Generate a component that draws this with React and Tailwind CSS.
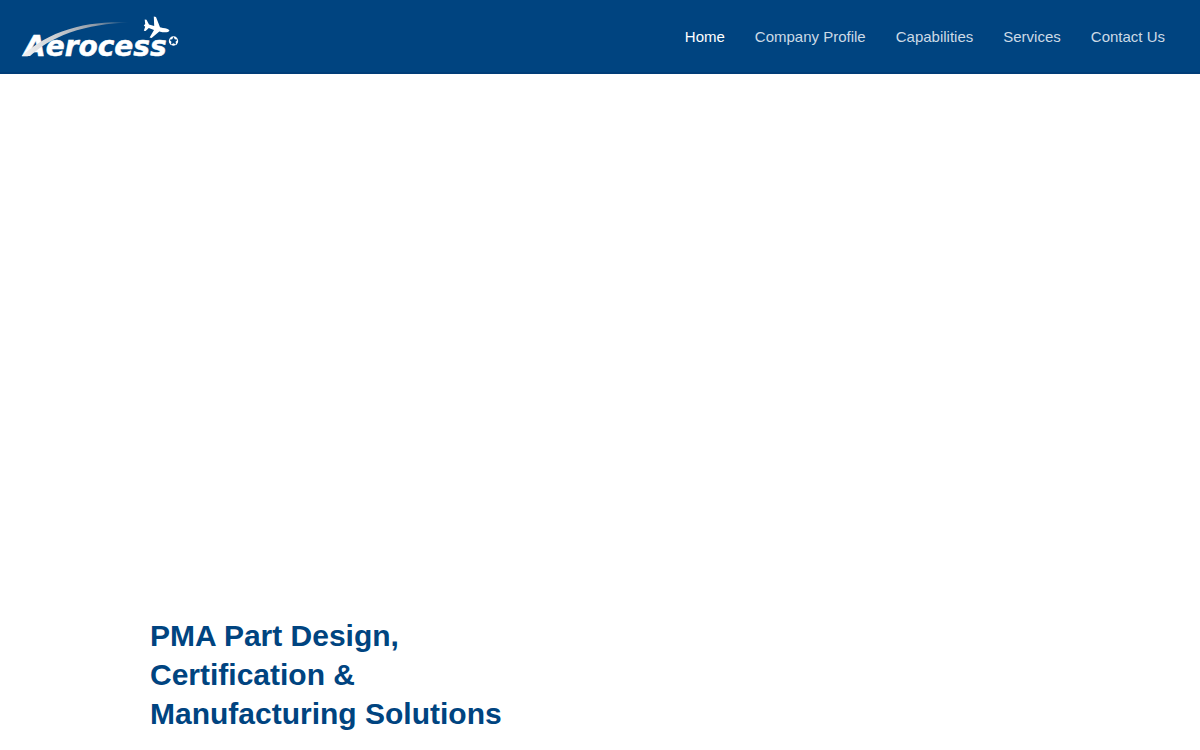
import React from 'react';

const links = ['Home', 'Company Profile', 'Capabilities', 'Services', 'Contact Us'];

function Logo() {
  return (
    <svg viewBox="0 -4 160 54" className="h-[54px] w-40" role="img" aria-label="Aerocess">
      <defs>
        <linearGradient id="swoosh" gradientUnits="userSpaceOnUse" x1="2" y1="40" x2="110" y2="8">
          <stop offset="0" stopColor="#f2f2f2" />
          <stop offset="0.35" stopColor="#c9ccd0" />
          <stop offset="0.7" stopColor="#8e99a6" />
          <stop offset="1" stopColor="#004480" />
        </linearGradient>
      </defs>
      <text
        x="4"
        y="42"
        fontSize="28"
        fontWeight="700"
        fontStyle="italic"
        fill="#ffffff"
        stroke="#ffffff"
        strokeWidth="0.5"
        className="font-['DejaVu_Sans',sans-serif]"
      >
        Aerocess
      </text>
      {/* Swoosh */}
      <path
        d="M2 42 C10 34 24 24 42 17.500 C64 9.500 86 7.500 110 8.500 C88 9 68 12.500 50 18.500 C32 25 20 33 10 42 Z"
        fill="url(#swoosh)"
      />
      {/* Plane */}
      <path
        d="M149.500 16.500 C148.500 15 146 14.200 143 14 L140 13.300 L136 3 L133.800 2.600 L134.200 12 L129 10.500 L126.500 5.800 L124.700 5.400 L125.200 10 L123.800 11.400 L125.200 12.800 L123.800 16.700 L125.600 17.100 L128.800 14 L134 16 L129.600 23.400 L131.600 24 L139.300 17.600 L142.500 18.200 C146 18.700 149 18.100 149.500 16.500 Z"
        fill="#ffffff"
      />
      {/* Star badge */}
      <circle cx="153.500" cy="27" r="4.700" fill="#ffffff" />
      <path
        d="M153.500 22.800 L154.800 25.300 L157.500 25.700 L155.600 27.700 L156 30.500 L153.500 29.200 L151 30.500 L151.400 27.700 L149.500 25.700 L152.200 25.300 Z"
        fill="#004480"
      />
    </svg>
  );
}

function App() {
  return (
    <div className="min-h-screen bg-white font-['Liberation_Sans',Arial,sans-serif]">
      {/* Header */}
      <header className="flex items-center justify-between border-b-2 border-[#003d78] bg-[#004480] pt-2.5 pb-2 pl-5 pr-[35px]">
        <a href="#home">
          <Logo />
        </a>
        <nav className="flex gap-[30px] text-[15px] leading-5">
          {links.map((link, i) => (
            <a
              key={link}
              href="#"
              className={i === 0 ? 'text-white' : 'text-[#ccdae6] hover:text-white'}
            >
              {link}
            </a>
          ))}
        </nav>
      </header>

      {/* Intro */}
      <main className="px-[150px] pt-[542px]">
        <h1 className="max-w-[400px] text-[30px] font-bold leading-[39px] text-[#004480]">
          PMA Part Design, Certification &amp; Manufacturing Solutions
        </h1>
      </main>
    </div>
  );
}

export default App;
